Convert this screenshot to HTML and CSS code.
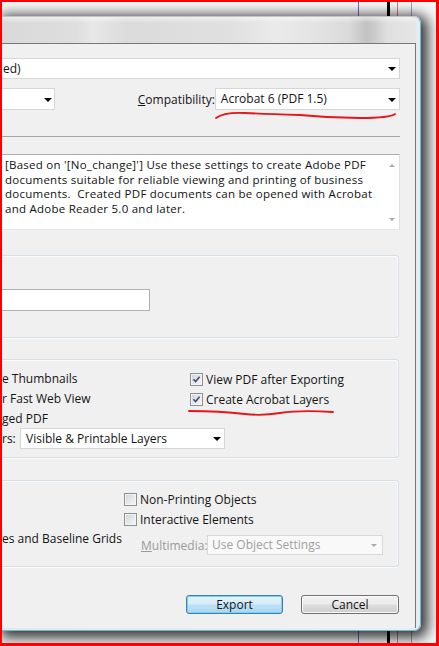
FILE: index.html
```html
<!DOCTYPE html>
<html lang="en">
<head>
<meta charset="utf-8">
<title>Export Adobe PDF</title>
<link rel="stylesheet" href="styles.css">
</head>
<body>
<div class="frame">
  <div class="window">
    <div class="titlebar"></div>
    <div class="panel">
      <div class="combo combo-preset"><span class="combo-text">ed)</span><span class="arrow"></span></div>

      <div class="row-compat">
        <div class="combo combo-standard"><span class="arrow"></span></div>
        <span class="label label-compat"><u>C</u>ompatibility:</span>
        <div class="combo combo-compat"><span class="combo-text">Acrobat 6 (PDF 1.5)</span><span class="arrow"></span></div>
      </div>

      <div class="separator"></div>

      <div class="description">
        <p class="description-text">[Based on '[No_change]'] Use these settings to create Adobe PDF<br>documents suitable for reliable viewing and printing of business<br>documents.&nbsp; Created PDF documents can be opened with Acrobat<br>and Adobe Reader 5.0 and later.</p>
        <div class="scrollbar"><span class="scroll-up"></span><span class="scroll-down"></span></div>
      </div>

      <div class="group group-pages">
        <div class="textfield"></div>
      </div>

      <div class="group group-options">
        <div class="option-grid">
          <span class="opt">e Thumbnails</span>
          <label class="check"><span class="box"><svg viewBox="0 0 11 11" width="11" height="11"><path d="M2.4 5.2 L4.6 7.6 L8.6 2.8" fill="none" stroke="#3d4f78" stroke-width="1.6"/></svg></span>View PDF after Exporting</label>
          <span class="opt">r Fast Web View</span>
          <label class="check"><span class="box"><svg viewBox="0 0 11 11" width="11" height="11"><path d="M2.4 5.2 L4.6 7.6 L8.6 2.8" fill="none" stroke="#3d4f78" stroke-width="1.6"/></svg></span>Create Acrobat Layers</label>
          <span class="opt">ged PDF</span>
          <span class="opt"></span>
          <div class="layers-row">
            <span class="opt layers-label">rs:</span>
            <div class="combo combo-layers"><span class="combo-text">Visible &amp; Printable Layers</span><span class="arrow"></span></div>
          </div>
        </div>
      </div>

      <div class="group group-include">
        <div class="include-left"><span class="opt">es and Baseline Grids</span></div>
        <div class="include-right">
          <label class="check"><span class="box"></span>Non-Printing Objects</label>
          <label class="check"><span class="box"></span>Interactive Elements</label>
          <div class="multimedia-row">
            <span class="label disabled multimedia-label"><u>M</u>ultimedia:</span>
            <div class="combo combo-disabled"><span class="combo-text">Use Object Settings</span><span class="arrow arrow-disabled"></span></div>
          </div>
        </div>
      </div>

      <div class="buttons">
        <button class="btn btn-default">Export</button>
        <button class="btn">Cancel</button>
      </div>
    </div>
  </div>

  <svg class="annotations" width="439" height="646" viewBox="0 0 439 646">
    <path d="M216 118 Q 224 112 245 113 T 300 115 Q 330 118 360 118 T 395 114" fill="none" stroke="#e8141b" stroke-width="1.8" stroke-linecap="round"/>
    <path d="M189 411 Q 220 411 245 414 Q 262 416 280 413 Q 300 410 333 412" fill="none" stroke="#e8141b" stroke-width="1.8" stroke-linecap="round"/>
  </svg>
</div>
</body>
</html>
```

FILE: styles.css
```css
* {
  box-sizing: border-box;
  margin: 0;
  padding: 0;
}

body {
  margin: 0;
  width: 439px;
  height: 646px;
  overflow: hidden;
  font-family: "Open Sans", "Noto Sans", sans-serif;
  font-size: 12px;
  color: #141414;
}

.frame {
  position: relative;
  width: 439px;
  height: 646px;
  border-style: solid;
  border-color: #ff0000;
  border-width: 2px 3px 3px 2px;
  overflow: hidden;
  padding-top: 14px;
  background:
    linear-gradient(#7c5cc4, #7c5cc4) 356px 0 / 1px 100% no-repeat,
    linear-gradient(#000, #000) 385px 0 / 3px 100% no-repeat,
    linear-gradient(#e07878, #e07878) 395px 0 / 1px 100% no-repeat,
    linear-gradient(#9aa2bc, #9aa2bc) 409px 0 / 1px 100% no-repeat,
    #f7f7f7;
}

.window {
  width: 419px;
  height: 615px;
  display: flex;
  flex-direction: column;
  padding: 0 4px 2px 0;
  border-right: 1px solid #6fb9d3;
  border-bottom: 1px solid #6fb9d3;
  border-top: 1px solid #c4c4c4;
  border-radius: 0 7px 7px 0;
  background: linear-gradient(90deg, #e3e8eb 0%, #e9eef1 95%, #dfeef4 100%);
  box-shadow: 3px 3px 13px 4px rgba(0, 0, 0, 0.78);
}

.titlebar {
  height: 26px;
  border-radius: 0 7px 0 0;
  background:
    linear-gradient(180deg, rgba(255,255,255,0.5) 0, rgba(255,255,255,0) 6px),
    linear-gradient(90deg, #d9d9d9 0%, #dedede 18%, #e8e8e8 22%, #dbdbdb 30%, #e0e0e0 55%, #eaeaea 66%, #e3e3e3 76%, #d9d9d9 84%, #c2c2c2 88%, #cbcbcb 90%, #dfdfdf 93%, #e6e6e6 100%);
}

.panel {
  flex: 1;
  display: flex;
  flex-direction: column;
  padding-right: 15px;
  border-top: 1px solid #787878;
  border-right: 1px solid #787878;
  background: #f0f0f0;
}

/* combo boxes */
.combo {
  display: flex;
  align-items: center;
  justify-content: space-between;
  background: #fff;
  border: 1px solid #d6d6d6;
  padding: 0 3px 0 0;
  white-space: nowrap;
}

.combo-text {
  line-height: 18px;
}

.arrow {
  width: 0;
  height: 0;
  border-left: 4px solid transparent;
  border-right: 4px solid transparent;
  border-top: 4px solid #000;
  margin-top: 1px;
}

.combo-preset {
  margin-top: 14px;
  height: 21px;
  border-left: none;
  padding-left: 1px;
}

.row-compat {
  display: flex;
  align-items: center;
  margin-top: 9px;
  height: 22px;
}

.combo-standard {
  width: 53px;
  height: 22px;
  border-left: none;
  justify-content: flex-end;
  padding-right: 2px;
}

.label {
  white-space: nowrap;
}

.label-compat {
  margin-left: 83px;
}

.combo-compat {
  margin-left: auto;
  width: 186px;
  height: 22px;
  padding-left: 5px;
}

.separator {
  margin-top: 26px;
  height: 1px;
  background: #a6a6a6;
}

/* description */
.description {
  margin-top: 17px;
  height: 76px;
  display: flex;
  background: #fff;
  border-top: 1px solid #abadb3;
  border-right: 1px solid #dbdfe6;
  border-bottom: 1px solid #e3e9ef;
}

.description-text {
  flex: 1;
  padding: 3px 0 0 3px;
  font-size: 11.5px;
  letter-spacing: 0.25px;
  line-height: 14.5px;
  white-space: nowrap;
  color: #111;
}

.scrollbar {
  width: 15px;
  display: flex;
  flex-direction: column;
  justify-content: space-between;
  align-items: center;
  padding: 9px 0 8px;
}

.scroll-up,
.scroll-down {
  width: 0;
  height: 0;
  border-left: 3px solid transparent;
  border-right: 3px solid transparent;
}

.scroll-up {
  border-bottom: 3px solid #a8a8a8;
}

.scroll-down {
  border-top: 3px solid #a8a8a8;
}

/* group boxes */
.group {
  margin-right: 1px;
  border: 1px solid #d5dfe5;
  border-left: none;
  border-radius: 0 3px 3px 0;
  box-shadow: inset -1px 1px 0 #fbfbfb, 0 1px 0 #fbfbfb;
}

.group-pages {
  margin-top: 25px;
  height: 83px;
}

.textfield {
  margin-top: 33px;
  width: 148px;
  height: 22px;
  background: #fff;
  border: 1px solid #b0b0b0;
  border-left: none;
}

.group-options {
  margin-top: 21px;
  height: 99px;
  padding-top: 9px;
}

.option-grid {
  display: grid;
  grid-template-columns: 188px 1fr;
  grid-template-rows: 20px 20px 19px 21px;
}

.opt {
  line-height: 20px;
  white-space: nowrap;
}

.check {
  display: flex;
  align-items: center;
  gap: 3px;
  height: 20px;
  white-space: nowrap;
}

.box {
  width: 13px;
  height: 13px;
  flex: none;
  display: flex;
  align-items: center;
  justify-content: center;
  border: 1px solid #8e8f8f;
  background: linear-gradient(135deg, #cfd3d8 0%, #e6e8eb 55%, #f7f7f7 100%);
  box-shadow: inset 0 0 0 1px #f4f4f4;
}

.layers-row {
  grid-column: 1 / 3;
  display: flex;
  align-items: center;
}

.layers-label {
  width: 18px;
}

.combo-layers {
  width: 205px;
  height: 21px;
  padding-left: 5px;
}

.group-include {
  margin-top: 22px;
  height: 87px;
  display: flex;
}

.include-left {
  width: 122px;
  padding-top: 48px;
}

.include-right {
  padding-top: 8px;
  display: flex;
  flex-direction: column;
}

.multimedia-row {
  display: flex;
  align-items: center;
  margin-top: 6px;
  height: 20px;
}

.multimedia-label {
  margin-left: 17px;
  width: 66px;
}

.disabled {
  color: #9a9a9a;
}

.combo-disabled {
  width: 176px;
  height: 20px;
  padding-left: 4px;
  padding-right: 5px;
  color: #a0a0a0;
  background: #f9f9f9;
  border-color: #d9d9d9;
}

.arrow-disabled {
  border-left-width: 3px;
  border-right-width: 3px;
  border-top: 3px solid #a8a8a8;
}

/* buttons */
.buttons {
  margin-top: 28px;
  display: flex;
  justify-content: flex-end;
  gap: 18px;
  padding-right: 1px;
}

.btn {
  width: 98px;
  height: 19px;
  font-family: inherit;
  font-size: 12px;
  color: #141414;
  line-height: 17px;
  border: 1px solid #707070;
  border-radius: 3px;
  background: linear-gradient(180deg, #f2f2f2 0%, #ebebeb 48%, #dddddd 52%, #cfcfcf 100%);
  box-shadow: inset 0 0 0 1px #fafafa;
}

.btn-default {
  width: 97px;
  border-color: #3c7fb1;
  background: linear-gradient(180deg, #e5f4fc 0%, #d4ecfa 48%, #bde2f7 52%, #a9d6f2 100%);
  box-shadow: inset 0 0 0 1px #7cd0f2;
}

.annotations {
  position: absolute;
  top: -2px;
  left: -2px;
  pointer-events: none;
}
```
